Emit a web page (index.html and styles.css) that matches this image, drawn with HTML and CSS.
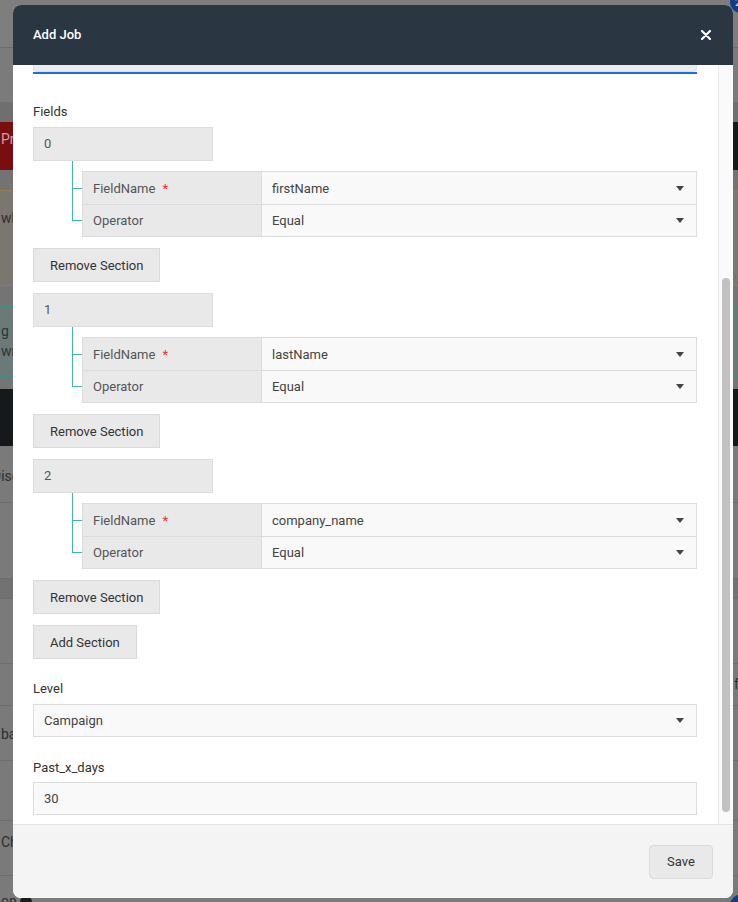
FILE: index.html
```html
<!DOCTYPE html>
<html lang="en">
<head>
    <meta charset="UTF-8">
    <meta name="viewport" content="width=device-width, initial-scale=1.0">
    <title>Add Job</title>
    <link rel="stylesheet" href="styles.css">
</head>
<body>
    <!-- dimmed page behind the dialog -->
    <div class="page">
        <div class="band band-top"></div>
        <div class="band band-nav"></div>
        <div class="band band-sub"></div>
        <div class="band band-dark"><span class="red-btn">Pr</span></div>
        <div class="band band-gap"></div>
        <div class="band band-warn"><span class="band-text">whi</span></div>
        <div class="band band-gap2"></div>
        <div class="band band-info"><span class="band-text">g le<br>wn</span></div>
        <div class="band band-gap3"></div>
        <div class="band band-black"></div>
        <div class="band band-row r1"><span class="band-text shift">Disc</span></div>
        <div class="band band-row r2"></div>
        <div class="band band-row r3"></div>
        <div class="band band-row r4"></div>
        <div class="band band-row r5"><span class="band-text far">fa</span></div>
        <div class="band band-row r6"><span class="band-text">ba</span></div>
        <div class="band band-row r7"></div>
        <div class="band band-row r8"><span class="band-text">Ch</span></div>
        <div class="band band-row r9"><span class="band-text">on</span><span class="dot"></span></div>
        <span class="badge badge-top">2</span>
        <span class="badge badge-bottom"></span>
    </div>

    <div class="modal">
        <div class="modal-header">
            <span class="modal-title">Add Job</span>
            <svg class="close" width="10" height="10" viewBox="0 0 10 10">
                <path d="M1 1L9 9M9 1L1 9" stroke="#fff" stroke-width="2.2" stroke-linecap="round"/>
            </svg>
        </div>

        <div class="modal-body">
            <div class="modal-content">
                <div class="cut-input"></div>
                <div class="focus-line"></div>

                <div class="field-label fields-title">Fields</div>

                <div class="section">
                    <div class="section-key">0</div>
                    <div class="section-body">
                        <div class="tree">
                            <div class="tree-branch first"></div>
                            <div class="tree-branch last"></div>
                        </div>
                        <div class="kv">
                            <div class="kv-row">
                                <div class="kv-label">FieldName <span class="req">*</span></div>
                                <div class="kv-value">firstName <span class="caret"></span></div>
                            </div>
                            <div class="kv-row">
                                <div class="kv-label">Operator</div>
                                <div class="kv-value">Equal <span class="caret"></span></div>
                            </div>
                        </div>
                    </div>
                    <button class="btn" type="button">Remove Section</button>
                </div>

                <div class="section">
                    <div class="section-key">1</div>
                    <div class="section-body">
                        <div class="tree">
                            <div class="tree-branch first"></div>
                            <div class="tree-branch last"></div>
                        </div>
                        <div class="kv">
                            <div class="kv-row">
                                <div class="kv-label">FieldName <span class="req">*</span></div>
                                <div class="kv-value">lastName <span class="caret"></span></div>
                            </div>
                            <div class="kv-row">
                                <div class="kv-label">Operator</div>
                                <div class="kv-value">Equal <span class="caret"></span></div>
                            </div>
                        </div>
                    </div>
                    <button class="btn" type="button">Remove Section</button>
                </div>

                <div class="section">
                    <div class="section-key">2</div>
                    <div class="section-body">
                        <div class="tree">
                            <div class="tree-branch first"></div>
                            <div class="tree-branch last"></div>
                        </div>
                        <div class="kv">
                            <div class="kv-row">
                                <div class="kv-label">FieldName <span class="req">*</span></div>
                                <div class="kv-value">company_name <span class="caret"></span></div>
                            </div>
                            <div class="kv-row">
                                <div class="kv-label">Operator</div>
                                <div class="kv-value">Equal <span class="caret"></span></div>
                            </div>
                        </div>
                    </div>
                    <button class="btn" type="button">Remove Section</button>
                </div>

                <button class="btn btn-add" type="button">Add Section</button>

                <div class="field-label level-label">Level</div>
                <div class="select">Campaign <span class="caret"></span></div>

                <div class="field-label days-label">Past_x_days</div>
                <div class="text-input">30</div>
            </div>
            <div class="scrollbar"><div class="scrollbar-thumb"></div></div>
        </div>

        <div class="modal-footer">
            <button class="btn btn-save" type="button">Save</button>
        </div>
    </div>
</body>
</html>
```

FILE: styles.css
```css
* {
    box-sizing: border-box;
}
body {
    margin: 0;
    width: 738px;
    height: 902px;
    overflow: hidden;
    position: relative;
    font-family: Roboto, "Noto Sans", Arial, sans-serif;
    font-size: 13px;
    color: #333;
    background: #7a7a7a;
}

/* background page */
.page {
    height: 902px;
}
.band {
    overflow: hidden;
    white-space: nowrap;
    font-size: 14px;
    line-height: 18px;
    color: #2e2e2e;
}
.band-top {
    height: 48px;
    background: #7e7e7e;
    border-bottom: 1px solid #6c6c6c;
}
.band-nav {
    height: 54px;
    background: #7b7b7b;
}
.band-sub {
    height: 20px;
    background: #6f6f6f;
}
.band-dark {
    height: 48px;
    background: #16191e;
}
.red-btn {
    display: inline-block;
    width: 200px;
    height: 48px;
    padding: 8px 0 0 1px;
    background: #7b0d10;
    color: #c9a3a3;
}
.band-gap {
    height: 20px;
    background: #737373;
}
.band-warn {
    height: 96px;
    background: #7b766f;
    border-top: 1px solid #9a7a4c;
    border-bottom: 1px solid #9a7a4c;
    padding-top: 18px;
}
.band-gap2 {
    height: 20px;
    background: #747474;
}
.band-info {
    height: 71px;
    background: #6c7979;
    border-top: 1px solid #3e8c8c;
    border-bottom: 1px solid #3e8c8c;
    padding-top: 14px;
    color: #2a3636;
    line-height: 20px;
}
.band-gap3 {
    height: 12px;
    background: #757575;
}
.band-black {
    height: 57px;
    background: #15181d;
}
.band-row {
    background: #7a7a7a;
    border-bottom: 1px solid #6d6d6d;
}
.r1 { height: 57px; padding-top: 21px; }
.r2 { height: 76px; }
.r3 { height: 20px; background: #727272; }
.r4 { height: 65px; }
.r5 { height: 42px; padding-top: 11px; }
.r6 { height: 55px; padding-top: 19px; }
.r7 { height: 60px; }
.r8 { height: 55px; padding-top: 12px; }
.r9 { height: 40px; padding-top: 16px; border-bottom: none; }
.band-text {
    display: inline-block;
    padding-left: 1px;
}
.shift {
    margin-left: -9px;
}
.far {
    margin-left: 733px;
}
.dot {
    display: inline-block;
    width: 12px;
    height: 12px;
    margin-left: 3px;
    border-radius: 50%;
    background: #1b1b1b;
    vertical-align: -2px;
}
.badge {
    position: absolute;
    border-radius: 50%;
    background: #123d86;
    color: #d6dcea;
    font-size: 11px;
    line-height: 20px;
    padding-left: 5px;
}
.badge-top {
    top: -9px;
    left: 730px;
    width: 22px;
    height: 22px;
    padding-top: 2px;
}
.badge-bottom {
    top: 894px;
    left: 730px;
    width: 24px;
    height: 24px;
}

/* dialog */
.modal {
    position: absolute;
    top: 5px;
    left: 13px;
    width: 720px;
    height: 893px;
    background: #fff;
    border-radius: 8px;
    overflow: hidden;
    display: flex;
    flex-direction: column;
}
.modal-header {
    flex: none;
    height: 60px;
    background: #2b3643;
    color: #fff;
    display: flex;
    align-items: center;
    justify-content: space-between;
    padding: 0 22px 1px 20px;
}
.modal-title {
    font-size: 13px;
    font-weight: 500;
}
.close {
    display: block;
}
.modal-body {
    flex: 1;
    display: flex;
    min-height: 0;
}
.modal-content {
    flex: 1;
    padding: 0 21px 0 20px;
}
.scrollbar {
    flex: none;
    width: 15px;
    background: #fafafa;
    border-left: 1px solid #e8e8e8;
}
.scrollbar-thumb {
    width: 8px;
    height: 534px;
    margin: 213px 0 0 3px;
    border-radius: 4px;
    background: #c1c1c1;
}
.modal-footer {
    flex: none;
    height: 74px;
    background: #f4f4f4;
    border-top: 1px solid #e3e3e3;
    display: flex;
    align-items: center;
    justify-content: flex-end;
    padding-right: 20px;
}

/* form */
.cut-input {
    height: 7px;
    background: #ececec;
    border: 1px solid #dedede;
    border-top: none;
    border-radius: 0 0 4px 4px;
}
.focus-line {
    height: 2px;
    background: #1570e6;
}
.field-label {
    line-height: 16px;
    color: #333;
}
.fields-title {
    margin: 30px 0 7px;
}
.level-label {
    margin: 22px 0 7px;
}
.days-label {
    margin: 23px 0 6px;
}
.section {
    margin-bottom: 11px;
}
.section-key {
    width: 180px;
    height: 34px;
    background: #e9e9e9;
    border: 1px solid #dcdcdc;
    padding-left: 10px;
    line-height: 32px;
    color: #555;
}
.section-body {
    display: flex;
    align-items: flex-start;
}
.tree {
    flex: none;
    width: 49px;
}
.tree-branch {
    width: 10px;
    margin-left: 39px;
    border-left: 1px solid #3fb3b6;
    border-bottom: 1px solid #3fb3b6;
}
.tree-branch.first {
    height: 28px;
}
.tree-branch.last {
    height: 32px;
}
.kv {
    flex: 1;
    margin-top: 10px;
    border: 1px solid #dcdcdc;
    border-bottom: none;
}
.kv-row {
    display: flex;
    height: 33px;
    border-bottom: 1px solid #dcdcdc;
}
.kv-row:last-child {
    height: 32px;
}
.kv-label {
    flex: none;
    width: 179px;
    background: #e9e9e9;
    border-right: 1px solid #dcdcdc;
    padding-left: 10px;
    display: flex;
    align-items: center;
    color: #555;
}
.req {
    color: #f0302f;
    margin-left: 7px;
}
.kv-value,
.select,
.text-input {
    flex: 1;
    background: #f9f9f9;
    display: flex;
    align-items: center;
    justify-content: space-between;
    padding: 0 12px 0 10px;
    color: #444;
}
.select,
.text-input {
    height: 33px;
    border: 1px solid #dcdcdc;
}
.caret {
    width: 0;
    height: 0;
    border-left: 4px solid transparent;
    border-right: 4px solid transparent;
    border-top: 5px solid #444;
}
.btn {
    display: block;
    height: 34px;
    margin-top: 11px;
    padding: 0 16px;
    background: #e9e9e9;
    border: 1px solid #dadada;
    font: inherit;
    color: #333;
}
.btn-add {
    margin-top: 0;
}
.btn-save {
    width: 64px;
    margin-top: 0;
    padding: 0;
    border-radius: 4px;
}
```
